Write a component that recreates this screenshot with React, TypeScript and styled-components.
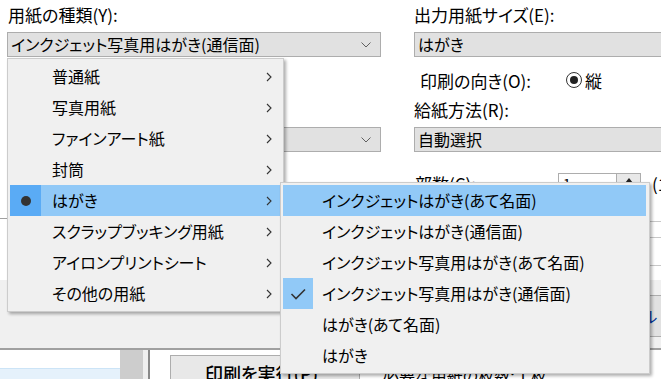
import React from "react";
import styled, { createGlobalStyle } from "styled-components";

const GlobalStyle = createGlobalStyle`
  html, body { margin: 0; padding: 0; background: #ffffff; }
  body { font-family: "Noto Sans CJK JP", "Noto Sans", sans-serif; }
`;

const FONT = `"Noto Sans CJK JP", "Noto Sans", sans-serif`;

const Screen = styled.div`
  position: relative;
  width: 661px;
  height: 379px;
  overflow: hidden;
  background: #ffffff;
  font-family: ${FONT};
  font-feature-settings: "palt";
  color: #000;
  display: flex;
  flex-direction: column;
`;

/* ---------- form ---------- */
const Form = styled.div`
  display: grid;
  grid-template-columns: 374px 300px;
  grid-template-rows: 29px 25px 41px 29px 25px 48px;
  column-gap: 33px;
  padding: 3px 0 0 7px;
  flex: none;
`;

const Label = styled.div<{ $col: number; $row: number; $indent?: number }>`
  grid-column: ${(p) => p.$col};
  grid-row: ${(p) => p.$row};
  font-size: 17px;
  line-height: 24px;
  height: 24px;
  padding-left: ${(p) => p.$indent ?? 1}px;
  white-space: nowrap;
`;

const Combo = styled.div<{ $col: number; $row: number }>`
  grid-column: ${(p) => p.$col};
  grid-row: ${(p) => p.$row};
  box-sizing: border-box;
  height: 25px;
  background: #e1e1e1;
  border: 1px solid #adadad;
  display: flex;
  align-items: center;
  padding-left: 3px;
  font-size: 16px;
  white-space: nowrap;
`;

const ComboText = styled.span`
  flex: 1;
  line-height: 23px;
`;

const ComboArrow = styled.svg`
  width: 10px;
  height: 6px;
  margin-right: 9px;
  flex: none;
`;

const OrientRow = styled.div`
  grid-column: 2;
  grid-row: 3;
  display: flex;
  align-items: center;
  height: 28px;
  margin-top: 9px;
  font-size: 17px;
  white-space: nowrap;
`;

const OrientLabel = styled.span`
  width: 152px;
  padding-left: 6px;
  box-sizing: border-box;
`;

const Radio = styled.span`
  width: 16px;
  height: 16px;
  box-sizing: border-box;
  border: 1.5px solid #333;
  border-radius: 50%;
  display: flex;
  align-items: center;
  justify-content: center;
  margin-right: 3px;
  &::after {
    content: "";
    width: 8px;
    height: 8px;
    border-radius: 50%;
    background: #222;
  }
`;

const CopiesRow = styled.div`
  grid-column: 2;
  grid-row: 6;
  display: flex;
  align-items: center;
  margin-top: 21px;
  height: 20px;
  font-size: 17px;
  white-space: nowrap;
`;

const CopiesLabel = styled.span`
  width: 144px;
  padding-left: 1px;
  box-sizing: border-box;
`;

const Spin = styled.div`
  width: 83px;
  height: 20px;
  box-sizing: border-box;
  border: 1px solid #adadad;
  background: #fff;
  display: flex;
  font-size: 14px;
`;

const SpinValue = styled.span`
  flex: 1;
  padding-left: 4px;
  line-height: 18px;
`;

const SpinButton = styled.span`
  width: 24px;
  border-left: 1px solid #adadad;
  background: #e8e8e8;
  display: flex;
  justify-content: center;
  padding-top: 4px;
  box-sizing: border-box;
  &::after {
    content: "";
    border-left: 4px solid transparent;
    border-right: 4px solid transparent;
    border-bottom: 5px solid #222;
    height: 0;
  }
`;

const CopiesHint = styled.span`
  margin-left: 11px;
`;

/* ---------- background below the form ---------- */
const MidArea = styled.div`
  height: 80px;
  display: flex;
  flex: none;
`;

const MidLeft = styled.div`
  width: 382px;
  padding-top: 18px;
  box-sizing: border-box;
`;

const Rule = styled.div`
  border-top: 1px solid #a0a0a0;
`;

const MidRight = styled.div`
  flex: 1;
  padding-top: 21px;
  margin-left: 18px;
`;

const TableHead = styled.div`
  height: 15px;
  border-top: 1px solid #c8c8c8;
  border-bottom: 1px solid #c8c8c8;
`;

const TableRow = styled.div`
  height: 27px;
  border-bottom: 1px solid #c8c8c8;
`;

const GrayBand = styled.div`
  height: 68px;
  background: #f0f0f0;
  display: flex;
  justify-content: flex-end;
  align-items: flex-start;
  flex: none;
`;

const BandButton = styled.div`
  margin-top: 15px;
  margin-right: -40px;
  width: 160px;
  height: 42px;
  box-sizing: border-box;
  border: 1px solid #adadad;
  background: #e1e1e1;
  display: flex;
  align-items: center;
  justify-content: center;
  font-size: 16px;
  color: #003399;
`;

const BottomBar = styled.div`
  flex: 1;
  border-top: 2px solid #a0a0a0;
  display: flex;
  background: #fff;
`;

const ListPane = styled.div`
  width: 120px;
  padding-top: 18px;
  box-sizing: border-box;
`;

const ListSel = styled.div`
  height: 14px;
  background: #e5f1fb;
  border-top: 1px solid #cce4f7;
`;

const ScrollTrack = styled.div`
  width: 23px;
  background: #cdcdcd;
`;

const PaneGap = styled.div`
  width: 5px;
  background: #f0f0f0;
`;

const Divider = styled.div`
  width: 2px;
  background: #8a8a8a;
`;

const BottomContent = styled.div`
  flex: 1;
  display: flex;
  align-items: flex-start;
  padding: 5px 0 0 20px;
`;

const PrintButton = styled.div`
  width: 190px;
  height: 32px;
  box-sizing: border-box;
  border: 1px solid #adadad;
  background: #e8e8e8;
  padding-left: 34px;
  font-size: 18px;
  line-height: 34px;
  font-weight: 500;
  white-space: nowrap;
`;

const NeedText = styled.div`
  margin-left: 23px;
  margin-top: 8px;
  font-size: 16px;
  white-space: nowrap;
`;

/* ---------- menus ---------- */
const Menu = styled.div<{ $left: number; $top: number; $width: number }>`
  position: absolute;
  left: ${(p) => p.$left}px;
  top: ${(p) => p.$top}px;
  width: ${(p) => p.$width}px;
  box-sizing: border-box;
  background: #f0f0f0;
  border: 1px solid #cccccc;
  box-shadow: 2px 2px 3px rgba(0, 0, 0, 0.32);
  padding: 2px 3px 2px 2px;
  font-size: 16px;
  z-index: 2;
`;

const Item = styled.div<{ $hot?: boolean }>`
  height: 31px;
  display: flex;
  align-items: center;
  background: ${(p) => (p.$hot ? "#91c9f7" : "transparent")};
  white-space: nowrap;
`;

const IconCell = styled.div<{ $w: number; $bg?: string }>`
  width: ${(p) => p.$w}px;
  align-self: stretch;
  flex: none;
  display: flex;
  align-items: center;
  justify-content: center;
  background: ${(p) => p.$bg ?? "transparent"};
`;

const ItemText = styled.span<{ $gap: number }>`
  flex: 1;
  margin-left: ${(p) => p.$gap}px;
  line-height: 31px;
`;

const Bullet = styled.span`
  width: 10px;
  height: 10px;
  border-radius: 50%;
  background: #333;
  margin-left: 1px;
`;

const SubArrow = styled.svg`
  width: 6px;
  height: 10px;
  margin-right: 8px;
  flex: none;
`;

const Chevron = () => (
  <SubArrow viewBox="0 0 6 10">
    <path d="M1 1 L5 5 L1 9" fill="none" stroke="#333" strokeWidth="1.1" />
  </SubArrow>
);

const CheckIcon = styled.svg`
  width: 16px;
  height: 12px;
`;

const mainItems = [
  "普通紙",
  "写真用紙",
  "ファインアート紙",
  "封筒",
  "はがき",
  "スクラップブッキング用紙",
  "アイロンプリントシート",
  "その他の用紙",
];

const subItems = [
  "インクジェットはがき(あて名面)",
  "インクジェットはがき(通信面)",
  "インクジェット写真用はがき(あて名面)",
  "インクジェット写真用はがき(通信面)",
  "はがき(あて名面)",
  "はがき",
];

export default function App() {
  return (
    <>
      <GlobalStyle />
      <Screen>
        <Form>
          <Label $col={1} $row={1}>用紙の種類(Y):</Label>
          <Combo $col={1} $row={2}>
            <ComboText>インクジェット写真用はがき(通信面)</ComboText>
            <ComboArrow viewBox="0 0 10 6">
              <path d="M0.5 0.5 L5 5 L9.5 0.5" fill="none" stroke="#606060" strokeWidth="1" />
            </ComboArrow>
          </Combo>
          <Combo $col={1} $row={5}>
            <ComboText></ComboText>
            <ComboArrow viewBox="0 0 10 6">
              <path d="M0.5 0.5 L5 5 L9.5 0.5" fill="none" stroke="#606060" strokeWidth="1" />
            </ComboArrow>
          </Combo>

          <Label $col={2} $row={1} $indent={0}>出力用紙サイズ(E):</Label>
          <Combo $col={2} $row={2}>
            <ComboText>はがき</ComboText>
          </Combo>
          <OrientRow>
            <OrientLabel>印刷の向き(O):</OrientLabel>
            <Radio />
            <span>縦</span>
          </OrientRow>
          <Label $col={2} $row={4} $indent={0}>給紙方法(R):</Label>
          <Combo $col={2} $row={5}>
            <ComboText>自動選択</ComboText>
          </Combo>
          <CopiesRow>
            <CopiesLabel>部数(C):</CopiesLabel>
            <Spin>
              <SpinValue>1</SpinValue>
              <SpinButton />
            </Spin>
            <CopiesHint>(1-99)</CopiesHint>
          </CopiesRow>
        </Form>

        <MidArea>
          <MidLeft>
            <Rule />
          </MidLeft>
          <MidRight>
            <TableHead />
            <TableRow />
          </MidRight>
        </MidArea>

        <GrayBand>
          <BandButton>キャンセル</BandButton>
        </GrayBand>

        <BottomBar>
          <ListPane>
            <ListSel />
          </ListPane>
          <ScrollTrack />
          <PaneGap />
          <Divider />
          <BottomContent>
            <PrintButton>印刷を実行(P)</PrintButton>
            <NeedText>必要な用紙の枚数: 1 枚</NeedText>
          </BottomContent>
        </BottomBar>

        <Menu $left={7} $top={58} $width={277}>
          {mainItems.map((t) => {
            const hot = t === "はがき";
            return (
              <Item key={t} $hot={hot}>
                <IconCell $w={31} $bg={hot ? "#5aabf5" : undefined}>
                  {hot && <Bullet />}
                </IconCell>
                <ItemText $gap={11}>{t}</ItemText>
                <Chevron />
              </Item>
            );
          })}
        </Menu>

        <Menu $left={280} $top={182} $width={370}>
          {subItems.map((t, i) => (
            <Item key={t} $hot={i === 0}>
              <IconCell $w={30} $bg={i === 3 ? "#91c9f7" : undefined}>
                {i === 3 && (
                  <CheckIcon viewBox="0 0 16 12">
                    <path d="M1.5 6 L6 10.5 L15 1.5" fill="none" stroke="#333" strokeWidth="1.6" />
                  </CheckIcon>
                )}
              </IconCell>
              <ItemText $gap={9}>{t}</ItemText>
            </Item>
          ))}
        </Menu>
      </Screen>
    </>
  );
}
